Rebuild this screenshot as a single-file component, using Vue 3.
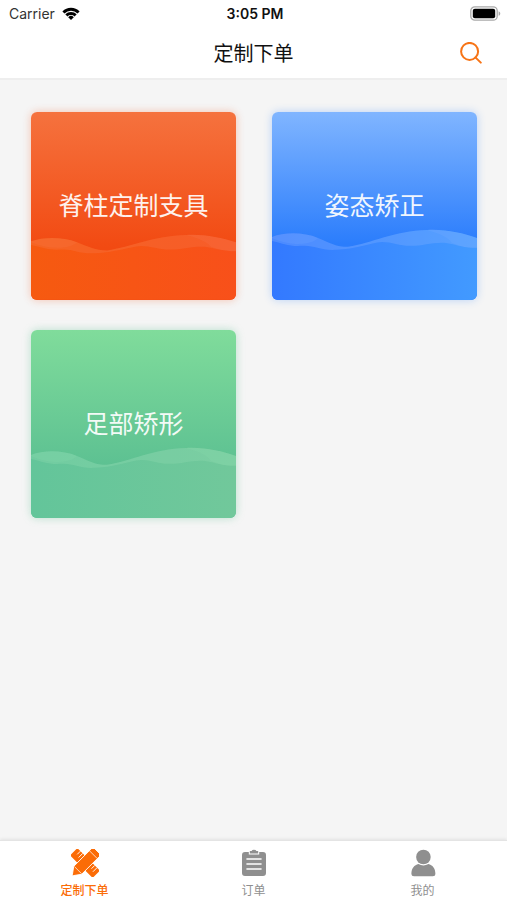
<template>
  <div class="page">
    <header class="top">
      <div class="status-bar">
        <div class="status-left">
          <span>Carrier</span>
          <svg class="wifi" viewBox="0 0 18 14" aria-hidden="true">
            <path d="M0.4 4.4 A12 12 0 0 1 17.6 4.4 L15.5 6.5 A9.2 9.2 0 0 0 2.5 6.5 Z" />
            <path d="M3.3 7.3 A8 8 0 0 1 14.7 7.3 L12.6 9.4 A5.1 5.1 0 0 0 5.4 9.4 Z" />
            <path d="M6.2 10.2 A4 4 0 0 1 11.8 10.2 L9 13 Z" />
          </svg>
        </div>
        <span class="status-time">3:05 PM</span>
        <div class="status-right">
          <svg class="battery" viewBox="0 0 31 15" aria-hidden="true">
            <rect x="0.8" y="0.8" width="26.4" height="13.4" rx="4" fill="#fff" stroke="#a9a9a9" stroke-width="1.3" />
            <rect x="2.8" y="2.8" width="22.4" height="9.4" rx="2" fill="#000" />
            <path d="M28.6 5.2 C30.8 6 30.8 9 28.6 9.8 Z" fill="#a9a9a9" />
          </svg>
        </div>
      </div>
      <div class="nav-bar">
        <h1>定制下单</h1>
        <button class="search-btn" type="button" aria-label="搜索">
          <svg viewBox="0 0 22 22" aria-hidden="true">
            <circle cx="9.6" cy="9.4" r="8.5" />
            <path d="M15.4 15.4 L20.8 20.6" />
          </svg>
        </button>
      </div>
    </header>

    <main class="card-grid">
      <button
        v-for="card in cards"
        :key="card.name"
        class="card"
        :class="card.theme"
        type="button"
      >
        <svg class="wave" viewBox="0 0 205 72" preserveAspectRatio="none" aria-hidden="true">
          <defs>
            <linearGradient :id="card.theme + '-fill'" x1="0" y1="0" x2="1" y2="0">
              <stop offset="0" :stop-color="card.from" />
              <stop offset="1" :stop-color="card.to" />
            </linearGradient>
          </defs>
          <path
            :fill="`url(#${card.theme}-fill)`"
            d="M0 8 C12 3 32 3 46 9 C58 14 64 18 76 18 C100 14 122 2 155 1 C174 0 190 4 205 9 L205 72 L0 72 Z"
          />
          <path
            class="crest"
            :fill="card.crest"
            d="M0 8 C12 3 32 3 46 9 C58 14 64 18 76 18 C100 14 122 2 155 1 C174 0 190 4 205 9 L205 19 C192 19 186 16 174 14 C160 13 152 17 138 17 C128 17 120 13 110 13 C98 14 84 20 64 21 C48 22 42 16 30 17 C18 18 10 14 0 12 Z"
          />
          <path
            class="ripple"
            :fill="card.crest"
            d="M0 8 C12 3 32 3 46 9 C40 16 20 18 0 9 Z M155 1 C174 0 190 4 205 9 L205 19 C192 19 186 16 180 14 C176 8 166 4 155 1 Z"
          />
        </svg>
        <span class="card-name">{{ card.name }}</span>
      </button>
    </main>

    <nav class="tab-bar">
      <a class="tab active" href="#order" aria-current="page">
        <svg class="tab-icon" viewBox="0 0 28 28" aria-hidden="true">
          <g transform="rotate(-45 14 14)">
            <rect x="8.8" y="-2" width="10.4" height="32" rx="2" />
            <path d="M14.6 2.4 H19.2 M13.4 5.6 H19.2 M14.6 22.6 H19.2 M13.4 25.8 H19.2" stroke="#fff" stroke-width="0.9" />
          </g>
          <g transform="rotate(45 14 14)">
            <path
              d="M8.4 -1 Q8.4 -3 10.4 -3 H17.6 Q19.6 -3 19.6 -1 V24.4 L14.8 31 Q14 32 13.2 31 L8.4 24.4 Z"
              stroke="#fff"
              stroke-width="0.9"
            />
            <path d="M8.8 2.2 H19.2 M8.8 24 H19.2" stroke="#fff" stroke-width="0.7" />
          </g>
        </svg>
        <span>定制下单</span>
      </a>
      <a class="tab" href="#list">
        <svg class="tab-icon" viewBox="0 0 28 28" aria-hidden="true">
          <path d="M5 3 H8.8 V5.6 H19.2 V3 H23 Q26 3 26 6 V24 Q26 27 23 27 H5 Q2 27 2 24 V6 Q2 3 5 3 Z" />
          <path d="M9.8 2 H11.6 Q12 0.8 14 0.8 Q16 0.8 16.4 2 H18.2 V4.6 H9.8 Z" />
          <path d="M7 10 H21 M7 15 H21 M7 20 H21" stroke="#fff" stroke-width="1.6" stroke-linecap="round" />
        </svg>
        <span>订单</span>
      </a>
      <a class="tab" href="#mine">
        <svg class="tab-icon" viewBox="0 0 28 28" aria-hidden="true">
          <circle cx="14.4" cy="8" r="7.3" />
          <path d="M2.4 25 C2.4 19 5.4 16 9.4 15 C12.6 16.9 16.2 16.9 19.4 15 C23.4 16 26.4 19 26.4 25 Q26.4 27.2 23.8 27.2 H5 Q2.4 27.2 2.4 25 Z" />
        </svg>
        <span>我的</span>
      </a>
    </nav>
  </div>
</template>

<script setup>
const cards = [
  { name: '脊柱定制支具', theme: 'red', from: '#f65a10', to: '#f8501a', crest: '#f68a62' },
  { name: '姿态矫正', theme: 'blue', from: '#3379ff', to: '#429aff', crest: '#8fb6ff' },
  { name: '足部矫形', theme: 'green', from: '#63c59a', to: '#71c89b', crest: '#98e0b4' }
]
</script>

<style>
body {
  margin: 0;
  background: #f5f5f5;
}
</style>

<style scoped>
.page {
  display: flex;
  flex-direction: column;
  min-height: 100vh;
  background: #f5f5f5;
  font-family: Inter, "Noto Sans CJK SC", sans-serif;
  color: #111;
}
.top {
  background: #fff;
  border-bottom: 2px solid #eee;
}
.status-bar {
  display: grid;
  grid-template-columns: 1fr auto 1fr;
  align-items: center;
  height: 27px;
  padding: 0 6px 0 9px;
  font-size: 14px;
}
.status-left {
  display: flex;
  align-items: center;
  gap: 7px;
  color: #333;
}
.wifi {
  width: 18px;
  height: 14px;
  fill: #000;
}
.status-time {
  font-weight: 600;
}
.status-right {
  display: flex;
  justify-content: flex-end;
}
.battery {
  width: 31px;
  height: 15px;
}
.nav-bar {
  display: grid;
  grid-template-columns: 1fr auto 1fr;
  align-items: center;
  height: 51px;
  padding: 0 25px;
}
.nav-bar h1 {
  grid-column: 2;
  margin: 0;
  font-size: 20px;
  font-weight: 400;
}
.search-btn {
  justify-self: end;
  display: flex;
  padding: 0;
  border: 0;
  background: none;
  cursor: pointer;
}
.search-btn svg {
  width: 22px;
  height: 22px;
  fill: none;
  stroke: #f77416;
  stroke-width: 2;
  stroke-linecap: round;
}
.card-grid {
  flex: 1;
  display: grid;
  grid-template-columns: 1fr 1fr;
  align-content: start;
  gap: 30px 36px;
  padding: 32px 30px 32px 31px;
}
.card {
  position: relative;
  display: flex;
  align-items: center;
  justify-content: center;
  aspect-ratio: 205 / 188;
  padding: 0 0 4px;
  border: 0;
  border-radius: 6px;
  overflow: hidden;
  color: #fff;
  font-family: inherit;
  font-size: 25px;
  cursor: pointer;
}
.card.red {
  background: linear-gradient(#f5723e, #f24a12 72%);
  box-shadow: 0 0 8px rgba(242, 74, 18, 0.3);
}
.card.blue {
  background: linear-gradient(#80b5ff, #2b7dfc 70%);
  box-shadow: 0 0 8px rgba(43, 125, 252, 0.3);
}
.card.green {
  background: linear-gradient(#80dc9b, #5dc192 72%);
  box-shadow: 0 0 8px rgba(93, 193, 146, 0.4);
}
.wave {
  position: absolute;
  left: 0;
  bottom: 0;
  width: 100%;
  height: 38%;
}
.red .wave {
  height: 35%;
}
.crest {
  opacity: 0.28;
}
.ripple {
  opacity: 0.14;
}
.red .crest {
  opacity: 0.22;
}
.card-name {
  position: relative;
  opacity: 0.92;
}
.tab-bar {
  display: flex;
  height: 59px;
  border-top: 1px solid #e4e4e4;
  box-shadow: 0 -1px 3px rgba(0, 0, 0, 0.08);
  background: #fff;
}
.tab {
  flex: 1;
  display: flex;
  flex-direction: column;
  align-items: center;
  gap: 5px;
  padding-top: 8px;
  color: #8f8f8f;
  font-size: 12px;
  line-height: 18px;
  text-decoration: none;
}
.tab.active {
  color: #fb6c07;
  font-weight: 500;
}
.tab-icon {
  width: 28px;
  height: 28px;
  fill: currentColor;
}
</style>
